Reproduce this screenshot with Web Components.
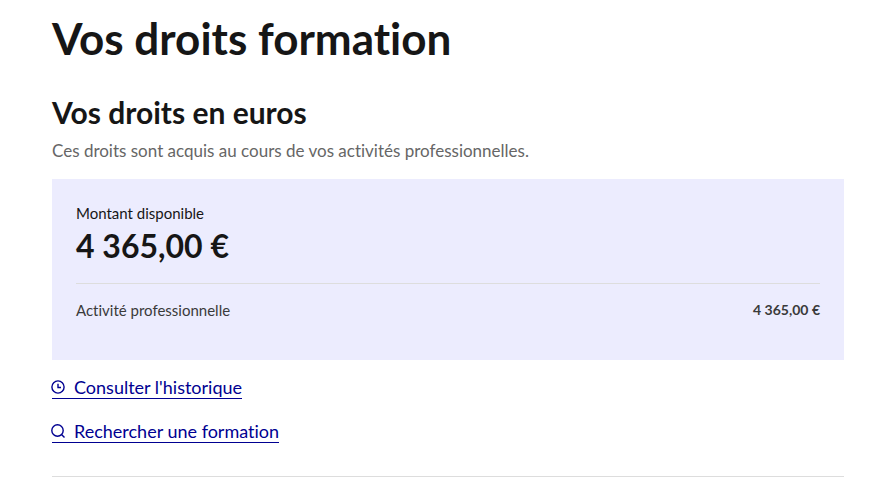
<!DOCTYPE html>
<html lang="fr"><head><meta charset="utf-8"><title>Vos droits formation</title>
<style>body{margin:0;background:#fff;color:#161616;font-family:Lato,"Noto Sans",sans-serif;font-variant-ligatures:none}</style></head>
<body>
<rights-page>
<rights-section heading="Vos droits en euros" intro="Ces droits sont acquis au cours de vos activités professionnelles.">
<balance-card label="Montant disponible" amount="4 365,00 €" source="Activité professionnelle"></balance-card>
<nav>
<action-link icon="clock">Consulter l'historique</action-link>
<action-link icon="search">Rechercher une formation</action-link>
</nav>
</rights-section>
</rights-page>
<script>
class RightsPage extends HTMLElement{constructor(){super();this.attachShadow({mode:'open'}).innerHTML=`
<style>:host{display:block;padding:14px 50px 0 52px}
h1{margin:0 0 32px;font-size:44px;line-height:48px;font-weight:700}
main{border-bottom:1px solid #ddd;padding-bottom:33px}</style>
<main><h1>Vos droits formation</h1><slot></slot></main>`}}
customElements.define('rights-page',RightsPage);

class RightsSection extends HTMLElement{constructor(){super();this.attachShadow({mode:'open'}).innerHTML=`
<style>:host{display:block}
h2{margin:0 0 9px;font-size:30px;line-height:36px;font-weight:700}
p{margin:0 0 16px;font-size:17px;line-height:24px;color:#666}
.content{display:flex;flex-direction:column;gap:16px}
::slotted(nav){display:grid;gap:21px}</style>
<section><h2></h2><p></p><div class="content"><slot></slot></div></section>`}
connectedCallback(){this.shadowRoot.querySelector('h2').textContent=this.getAttribute('heading');this.shadowRoot.querySelector('p').textContent=this.getAttribute('intro')}}
customElements.define('rights-section',RightsSection);

class BalanceCard extends HTMLElement{constructor(){super();this.attachShadow({mode:'open'}).innerHTML=`
<style>:host{display:block;background:#ececfe;padding:22px 24px 38px}
.label{font-size:15px;line-height:24px}
.total{font-size:32px;line-height:42px;font-weight:700}
.row{display:flex;justify-content:space-between;margin-top:16px;padding-top:14px;border-top:1px solid #ddd;font-size:15px;line-height:24px;color:#3a3a3a}
strong{font-size:14px}</style>
<div class="label"></div><div class="total"></div><div class="row"><span></span><strong></strong></div>`}
connectedCallback(){const q=s=>this.shadowRoot.querySelector(s);q('.label').textContent=this.getAttribute('label');q('.total').textContent=q('strong').textContent=this.getAttribute('amount');q('span').textContent=this.getAttribute('source')}}
customElements.define('balance-card',BalanceCard);

const icons={clock:'<circle cx="7" cy="7" r="6.1"/><path d="M7 3.7V7.5H10"/>',search:'<circle cx="6.5" cy="6.5" r="5.7"/><path d="m10.5 10.5 3 3"/>'};
class ActionLink extends HTMLElement{constructor(){super();this.attachShadow({mode:'open'}).innerHTML=`
<style>:host{display:flex;font-size:18px;line-height:22px}
a{display:inline-flex;align-items:center;gap:8px;color:#000091;text-decoration:none;border-bottom:1px solid}
svg{width:14px;height:14px;margin:0 1px 0 -1px;fill:none;stroke:currentColor;stroke-width:1.4}</style>
<a href="#"><svg viewBox="0 0 14 14" aria-hidden="true"></svg><span><slot></slot></span></a>`}
connectedCallback(){this.shadowRoot.querySelector('svg').innerHTML=icons[this.getAttribute('icon')]}}
customElements.define('action-link',ActionLink);
</script>
</body></html>
